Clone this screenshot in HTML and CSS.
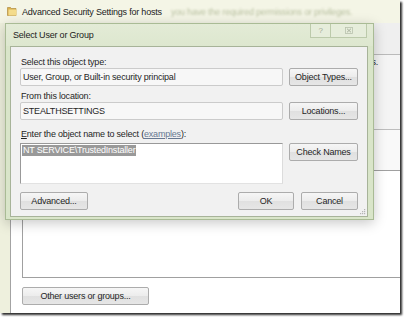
FILE: index.html
```html
<!DOCTYPE html>
<html>
<head>
<meta charset="utf-8">
<title>Select User or Group</title>
<link rel="stylesheet" href="styles.css">
</head>
<body>
<div class="shot">
  <div class="bg-titlebar">
    <svg class="folder" width="10" height="10" viewBox="0 0 10 10">
      <path d="M0.5 1.5h3l1 1h4.5v7h-8.5z" fill="#d9b04c" stroke="#a88130" stroke-width="0.6"/>
      <path d="M1.5 3.5h8v6h-8z" fill="#f4dc8c"/>
    </svg>
    <span class="bg-title">Advanced Security Settings for hosts</span>
    <span class="blur-text">you have the required permissions or privileges.</span>
  </div>
  <div class="bg-body">
    <div class="bg-frame"></div>
    <div class="bg-client">
      <div class="bg-tabs"></div>
      <div class="bg-intro">if you have the required permissions or privileges.</div>
      <div class="bg-owner"></div>
      <div class="bg-list"></div>
      <div class="bg-actions"><button class="btn btn-other">Other users or groups...</button></div>
    </div>
  </div>

  <div class="dialog">
    <div class="dlg-titlebar">
      <span class="dlg-title">Select User or Group</span>
      <div class="dlg-controls">
        <span class="ctl ctl-help">?</span>
        <span class="ctl ctl-close">
          <svg width="8" height="7" viewBox="0 0 8 7"><rect x="0.5" y="0.5" width="7" height="6" fill="none" stroke="#b9c1ad" stroke-width="0.8"/><path d="M2 1.7l4 3.6M6 1.7l-4 3.6" stroke="#a3ab97" stroke-width="0.9"/></svg>
        </span>
      </div>
    </div>
    <div class="dlg-panel">
      <div class="lbl">Select this object type:</div>
      <div class="row">
        <div class="field">User, Group, or Built-in security principal</div>
        <button class="btn">Object Types...</button>
      </div>
      <div class="lbl lbl-2">From this location:</div>
      <div class="row">
        <div class="field">STEALTHSETTINGS</div>
        <button class="btn">Locations...</button>
      </div>
      <div class="lbl lbl-3"><u>E</u>nter the object name to select (<span class="link">examples</span>):</div>
      <div class="row row-top">
        <div class="names"><span class="sel">NT SERVICE\TrustedInstaller</span></div>
        <button class="btn">Check Names</button>
      </div>
      <div class="actions">
        <button class="btn btn-adv">Advanced...</button>
        <div class="actions-right">
          <button class="btn btn-ok">OK</button>
          <button class="btn btn-cancel">Cancel</button>
        </div>
      </div>
      <svg class="grip" width="7" height="7" viewBox="0 0 7 7">
        <rect x="5" y="1" width="1.2" height="1.2" fill="#b4b4b4"/>
        <rect x="3" y="3" width="1.2" height="1.2" fill="#b4b4b4"/>
        <rect x="5" y="3" width="1.2" height="1.2" fill="#b4b4b4"/>
        <rect x="1" y="5" width="1.2" height="1.2" fill="#b4b4b4"/>
        <rect x="3" y="5" width="1.2" height="1.2" fill="#b4b4b4"/>
        <rect x="5" y="5" width="1.2" height="1.2" fill="#b4b4b4"/>
      </svg>
    </div>
  </div>
</div>
</body>
</html>
```
FILE: styles.css
```css
* { box-sizing: border-box; }
html, body { margin: 0; padding: 0; background: #fff; }
body {
  width: 404px;
  height: 317px;
  overflow: hidden;
  font-family: "Liberation Sans", Arial, sans-serif;
  font-size: 9px;
  letter-spacing: -0.2px;
  color: #1f1f1f;
}
button { font: inherit; letter-spacing: inherit; color: inherit; }

.shot {
  position: relative;
  width: 400px;
  height: 313px;
  display: flex;
  flex-direction: column;
  background: #f2f3e3;
  box-shadow: 2px 2px 2px #2c2c2c;
}

/* background window */
.bg-titlebar {
  height: 23px;
  flex: none;
  display: flex;
  align-items: center;
  padding-left: 7px;
  background: #f4f5e6;
}
.folder { flex: none; margin-top: -1px; }
.bg-title { margin-left: 5px; color: #222; }
.blur-text { margin-left: 9px; color: #b7bf9f; filter: blur(1px); white-space: nowrap; }

.bg-body { flex: 1; display: flex; }
.bg-frame {
  width: 10px;
  flex: none;
  background: #eef0dd;
}
.bg-client {
  flex: 1;
  display: flex;
  flex-direction: column;
  background: #fff;
  border-left: 1px solid #a3a3a3;
}
.bg-tabs { height: 32px; flex: none; background: #efefef; border-bottom: 1px solid #bababa; }
.bg-intro {
  height: 75px;
  flex: none;
  background: #f4f4f4;
  border-bottom: 1px solid #bdbdbd;
  padding: 1px 22px 0 0;
  line-height: 12px;
  text-align: right;
  white-space: nowrap;
  overflow: hidden;
}
.bg-owner { height: 40px; flex: none; background: #f9f9f9; }
.bg-list {
  height: 108px;
  flex: none;
  margin-left: 11px;
  border: 1px solid #a0a0a0;
  border-right: none;
  background: #fff;
}
.bg-actions { padding: 9px 0 0 11px; }
.btn-other { width: 127px; height: 17px; }

/* buttons */
.btn {
  display: flex;
  align-items: center;
  justify-content: center;
  padding: 0;
  height: 18px;
  border: 1px solid #acacac;
  border-radius: 2px;
  background: linear-gradient(#f6f6f6, #ececec 50%, #e0e0e0 51%, #e6e6e6);
  color: #1f1f1f;
  white-space: nowrap;
}

/* dialog */
.dialog {
  position: absolute;
  left: 5px;
  top: 23px;
  width: 369px;
  height: 197px;
  display: flex;
  flex-direction: column;
  padding: 0 5px 2px 4px;
  border: 1px solid #a9bb95;
  background: #d9e5c9;
  box-shadow: 0 3px 12px rgba(0, 0, 0, 0.22);
}
.dlg-titlebar {
  height: 22px;
  flex: none;
  display: flex;
  justify-content: space-between;
  background: linear-gradient(#e3ebd6, #dde7cf);
  margin: 0 -5px 0 -4px;
  padding: 0 6px 0 6px;
}
.dlg-title { align-self: center; margin-left: 1px; color: #1c1c1c; }
.dlg-controls { display: flex; height: 14px; }
.ctl {
  display: flex;
  align-items: center;
  justify-content: center;
  border: 1px solid #bccaab;
  border-top: none;
  background: #e6eddb;
}
.ctl-help { width: 21px; color: #a3ab96; font-size: 8px; }
.ctl-close { width: 36px; border-left: none; }

.dlg-panel {
  position: relative;
  flex: 1;
  border: 1px solid #a7b399;
  background: #f1f1f1;
  padding: 9px 9px 0 9px;
  display: flex;
  flex-direction: column;
}
.lbl { line-height: 12px; height: 12px; padding-left: 1px; }
.lbl-2 { margin-top: 4px; }
.lbl-3 { margin-top: 8px; }
.lbl u { text-decoration: underline; }
.link { color: #677891; text-decoration: underline; }

.row {
  display: grid;
  grid-template-columns: 263px 69px;
  column-gap: 6px;
  align-items: center;
}
.field {
  height: 18px;
  line-height: 16px;
  padding-left: 2px;
  border: 1px solid #cbcbcb;
  border-radius: 2px;
  background: #f7f7f7;
  white-space: nowrap;
  overflow: hidden;
}
.row-top { align-items: start; margin-top: 3px; }
.names {
  height: 41px;
  border: 1px solid;
  border-color: #999 #dcdcdc #e2e2e2 #999;
  background: #fff;
  padding: 1px 0 0 1px;
}
.sel {
  display: inline-block;
  background: #999;
  color: #fff;
  line-height: 11px;
  padding: 0 1px;
}

.actions {
  display: flex;
  justify-content: space-between;
  margin-top: 8px;
}
.btn-adv { width: 68px; }
.actions-right { display: flex; gap: 7px; }
.btn-ok { width: 56px; }
.btn-cancel { width: 57px; }

.grip { position: absolute; right: 1px; bottom: 1px; }
```
